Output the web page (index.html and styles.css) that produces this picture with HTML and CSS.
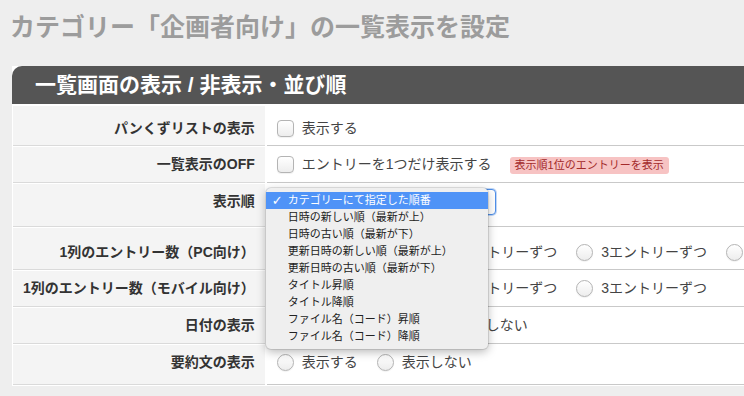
FILE: index.html
```html
<!DOCTYPE html>
<html lang="ja">

<head>
  <meta charset="UTF-8">
  <meta name="viewport" content="width=device-width, initial-scale=1.0">
  <title>カテゴリー「企画者向け」の一覧表示を設定</title>
  <link rel="stylesheet" href="styles.css">
</head>

<body>
  <h1 class="page-title">カテゴリー「企画者向け」の一覧表示を設定</h1>

  <div class="panel">
    <h2 class="panel-head">一覧画面の表示 / 非表示・並び順</h2>
    <table class="settings">
      <tr class="row-crumb">
        <th>パンくずリストの表示</th>
        <td><label class="opt"><span class="check"></span>表示する</label></td>
      </tr>
      <tr>
        <th>一覧表示のOFF</th>
        <td>
          <label class="opt"><span class="check"></span>エントリーを1つだけ表示する</label><span class="badge">表示順1位のエントリーを表示</span>
        </td>
      </tr>
      <tr class="row-order">
        <th>表示順</th>
        <td>
          <div class="select-wrap">
            <div class="select"></div>
            <ul class="menu">
              <li class="active">カテゴリーにて指定した順番</li>
              <li>日時の新しい順（最新が上）</li>
              <li>日時の古い順（最新が下）</li>
              <li>更新日時の新しい順（最新が上）</li>
              <li>更新日時の古い順（最新が下）</li>
              <li>タイトル昇順</li>
              <li>タイトル降順</li>
              <li>ファイル名（コード）昇順</li>
              <li>ファイル名（コード）降順</li>
            </ul>
          </div>
        </td>
      </tr>
      <tr class="row-pc">
        <th>1列のエントリー数（PC向け）</th>
        <td>
          <label class="opt"><span class="radio"></span>1エントリーずつ</label>
          <label class="opt"><span class="radio"></span>2エントリーずつ</label>
          <label class="opt"><span class="radio"></span>3エントリーずつ</label>
          <label class="opt"><span class="radio"></span>4エントリーずつ</label>
        </td>
      </tr>
      <tr>
        <th>1列のエントリー数（モバイル向け）</th>
        <td>
          <label class="opt"><span class="radio"></span>1エントリーずつ</label>
          <label class="opt"><span class="radio"></span>2エントリーずつ</label>
          <label class="opt"><span class="radio"></span>3エントリーずつ</label>
        </td>
      </tr>
      <tr>
        <th>日付の表示</th>
        <td>
          <label class="opt"><span class="radio"></span>年月日を表示する</label>
          <label class="opt"><span class="radio"></span>表示しない</label>
        </td>
      </tr>
      <tr class="row-summary">
        <th>要約文の表示</th>
        <td>
          <label class="opt"><span class="radio"></span>表示する</label>
          <label class="opt"><span class="radio"></span>表示しない</label>
        </td>
      </tr>
    </table>
  </div>
</body>

</html>
```

FILE: styles.css
```css
html,
body {
  overflow: hidden;
}

body {
  margin: 0;
  padding: 0;
  background-color: #eeeeee;
  font-family: 'Liberation Sans', 'Noto Sans CJK JP', sans-serif;
  color: #333;
}

.page-title {
  margin: 0 0 23px;
  padding: 11px 10px 0;
  font-size: 25px;
  line-height: 32px;
  font-weight: bold;
  color: #9c9c9c;
  white-space: nowrap;
}

.panel {
  margin-left: 12px;
  background-color: #fff;
}

.panel-head {
  margin: 0;
  padding: 0 23px;
  height: 38px;
  line-height: 38px;
  font-size: 21px;
  font-weight: bold;
  color: #fff;
  background-color: #555;
  border-top-left-radius: 10px;
  white-space: nowrap;
}

.settings {
  border-collapse: separate;
  border-spacing: 2px 1px;
  margin: 1px 0 0 -1px;
}

.settings th,
.settings td {
  padding: 8px 10px;
  line-height: 19px;
  font-size: 14px;
  vertical-align: top;
  white-space: nowrap;
}

.settings th {
  width: 231px;
  text-align: right;
  font-weight: bold;
  color: #333;
  background-color: #f4f4f4;
  border-bottom: 1px solid #dadada;
}

.settings td {
  color: #444;
  background-color: #fff;
  border-bottom: 1px solid #c9c9c9;
}

.settings .row-crumb th,
.settings .row-crumb td {
  padding-top: 13px;
  padding-bottom: 7px;
}

.settings .row-order td {
  padding: 5px 0 11px;
}

.settings .row-pc th,
.settings .row-pc td {
  padding-top: 15px;
  padding-bottom: 7px;
}

.settings .row-summary th,
.settings .row-summary td {
  padding-bottom: 12px;
}

.opt {
  display: inline-block;
  margin-right: 15px;
}

.check,
.radio {
  display: inline-block;
  box-sizing: border-box;
  width: 17px;
  height: 17px;
  margin: 1px 8px 0 0;
  vertical-align: top;
  border: 1px solid #b4b4b4;
  background: linear-gradient(#ffffff, #ededed);
  box-shadow: 0 1px 1px rgba(0, 0, 0, 0.06);
}

.check {
  border-radius: 4px;
}

.radio {
  border-radius: 50%;
}

.badge {
  display: inline-block;
  margin: 2px 0 0 3px;
  padding: 0 5px;
  vertical-align: top;
  font-size: 11px;
  line-height: 17px;
  color: #a32a2a;
  background-color: #f7c3c3;
  border-radius: 3px;
}

.select-wrap {
  position: relative;
}

.select {
  box-sizing: border-box;
  width: 229px;
  height: 26px;
  background-color: #fff;
  border: 1px solid #4f8fe8;
  border-radius: 4px;
  box-shadow: 0 0 0 1px rgba(79, 143, 232, 0.35);
}

.menu {
  position: absolute;
  left: -1px;
  top: -1px;
  z-index: 2;
  width: 222px;
  margin: 0;
  padding: 4px 0;
  list-style: none;
  background-color: #efefef;
  border-radius: 5px;
  box-shadow: 0 3px 10px rgba(0, 0, 0, 0.28), 0 0 0 1px rgba(0, 0, 0, 0.1);
  font-size: 11px;
  line-height: 17px;
  color: #222;
}

.menu li {
  position: relative;
  padding-left: 22px;
}

.menu li.active {
  color: #fff;
  background-color: #4f93f7;
}

.menu li.active::before {
  content: "✓";
  position: absolute;
  left: 6px;
  font-family: 'DejaVu Sans', sans-serif;
  font-size: 13px;
  font-weight: bold;
}
```
